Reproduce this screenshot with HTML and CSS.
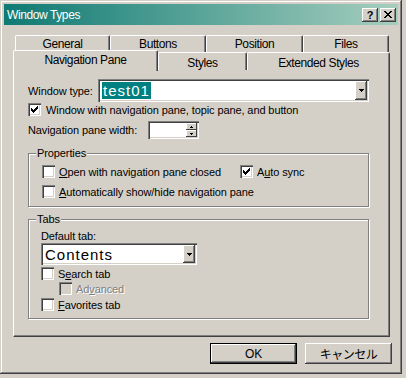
FILE: index.html
```html
<!DOCTYPE html>
<html lang="en">
<head>
  <meta charset="UTF-8">
  <title>Window Types</title>
  <link rel="stylesheet" href="styles.css">
</head>
<body>
  <div class="window">
    <!-- Title bar -->
    <div class="titlebar">
      <span class="title">Window Types</span>
      <div class="caption-buttons">
        <span class="cap-btn help">?</span>
        <span class="cap-btn">
          <svg width="8" height="7" viewBox="0 0 8 7"><path d="M0 0h2v1h-2z M6 0h2v1h-2z M1 1h2v1h-2z M5 1h2v1h-2z M2 2h4v1h-4z M3 3h2v1h-2z M2 4h4v1h-4z M1 5h2v1h-2z M5 5h2v1h-2z M0 6h2v1h-2z M6 6h2v1h-2z" fill="#000"/></svg>
        </span>
      </div>
    </div>

    <div class="content">
      <!-- Tabs -->
      <div class="tabrow back">
        <div class="tab tab-general">General</div>
        <div class="tab tab-buttons">Buttons</div>
        <div class="tab tab-position">Position</div>
        <div class="tab tab-files">Files</div>
      </div>
      <div class="tabrow front">
        <div class="tab tab-nav selected">Navigation Pane</div>
        <div class="tab tab-styles">Styles</div>
        <div class="tab tab-extended">Extended Styles</div>
      </div>

      <!-- Tab page -->
      <div class="panel">
        <div class="row type-row">
          <span class="type-label">Window type:</span>
          <div class="combo combo-wide">
            <div class="combo-text"><span class="sel">test01</span></div>
            <div class="drop-btn"><svg width="5" height="3" viewBox="0 0 5 3"><path d="M0 0h5v1h-1v1h-1v1h-1v-1h-1v-1h-1z" fill="#000"/></svg></div>
          </div>
        </div>

        <div class="check-row first">
          <span class="cb checked"><svg width="13" height="13" viewBox="0 0 13 13"><path d="M3 5h1v1h1v1h1v-1h1v-1h1v-1h1v-1h1v3h-1v1h-1v1h-1v1h-1v1h-1v-1h-1v-1h-1z" fill="#000"/></svg></span>
          <span>Window with navigation pane, topic pane, and button</span>
        </div>

        <div class="row width-row">
          <span class="width-label">Navigation pane width:</span>
          <div class="spin">
            <div class="spin-edit"></div>
            <div class="spin-btns">
              <div class="spin-btn"><svg width="3" height="2" viewBox="0 0 3 2"><path d="M1 0h1v1h1v1h-3v-1h1z" fill="#000"/></svg></div>
              <div class="spin-btn"><svg width="3" height="2" viewBox="0 0 3 2"><path d="M0 0h3v1h-1v1h-1v-1h-1z" fill="#000"/></svg></div>
            </div>
          </div>
        </div>

        <!-- Properties group -->
        <div class="group group-props">
          <span class="group-label">Properties</span>
          <div class="check-row">
            <div class="check-item closed-item">
              <span class="cb"></span>
              <span><u>O</u>pen with navigation pane closed</span>
            </div>
            <div class="check-item">
              <span class="cb checked"><svg width="13" height="13" viewBox="0 0 13 13"><path d="M3 5h1v1h1v1h1v-1h1v-1h1v-1h1v-1h1v3h-1v1h-1v1h-1v1h-1v1h-1v-1h-1v-1h-1z" fill="#000"/></svg></span>
              <span>A<u>u</u>to sync</span>
            </div>
          </div>
          <div class="check-row gap5">
            <span class="cb"></span>
            <span><u>A</u>utomatically show/hide navigation pane</span>
          </div>
        </div>

        <!-- Tabs group -->
        <div class="group group-tabs">
          <span class="group-label">Tabs</span>
          <div class="default-label">Default tab:</div>
          <div class="combo combo-small">
            <div class="combo-text"><span class="plain">Contents</span></div>
            <div class="drop-btn"><svg width="5" height="3" viewBox="0 0 5 3"><path d="M0 0h5v1h-1v1h-1v1h-1v-1h-1v-1h-1z" fill="#000"/></svg></div>
          </div>
          <div class="check-row gap1">
            <span class="cb"></span>
            <span>S<u>e</u>arch tab</span>
          </div>
          <div class="check-row indent">
            <span class="cb disabled"></span>
            <span class="disabled-text">Ad<u>v</u>anced</span>
          </div>
          <div class="check-row gap1">
            <span class="cb"></span>
            <span><u>F</u>avorites tab</span>
          </div>
        </div>
      </div>

      <!-- Dialog buttons -->
      <div class="buttons">
        <div class="btn default"><span>OK</span></div>
        <div class="btn jp"><span>キャンセル</span></div>
      </div>
    </div>
  </div>
</body>
</html>
```

FILE: styles.css
```css
/* Global */
* {
  margin: 0;
  padding: 0;
  box-sizing: border-box;
}

body {
  background: #d4d0c8;
  font-family: "Liberation Sans", Arial, sans-serif;
  font-size: 11px;
  letter-spacing: -0.1px;
  color: #000;
}

/* Window frame */
.window {
  width: 402px;
  height: 374px;
  padding: 4px;
  background: #d4d0c8;
  box-shadow: inset -1px -1px #404040, inset 1px 1px #d4d0c8,
              inset -2px -2px #808080, inset 2px 2px #fff;
}

.titlebar {
  height: 21px;
  display: flex;
  align-items: center;
  justify-content: space-between;
  padding: 0 2px 0 3px;
  background: linear-gradient(to right, #0e7a74, #a6cebe);
  color: #fff;
}

.title {
  font-size: 12px;
  letter-spacing: -0.4px;
}

.caption-buttons {
  display: flex;
  gap: 2px;
}

.cap-btn {
  width: 16px;
  height: 14px;
  display: flex;
  align-items: center;
  justify-content: center;
  background: #d4d0c8;
  color: #000;
  font-weight: bold;
  font-size: 11px;
  box-shadow: inset -1px -1px #404040, inset 1px 1px #fff,
              inset -2px -2px #808080;
}

.content {
  padding: 10px 0 0 9px;
}

/* Tabs */
.tabrow {
  display: flex;
}

.tabrow.back {
  height: 17px;
  margin-left: 2px;
}

.tabrow.front {
  height: 18px;
}

.tab {
  display: flex;
  align-items: center;
  justify-content: center;
  background: #d4d0c8;
  border-top: 1px solid #fff;
  border-left: 1px solid #fff;
  border-right: 1px solid #404040;
  border-radius: 2px 2px 0 0;
  box-shadow: inset -1px 0 #808080;
  font-size: 12px;
  letter-spacing: -0.4px;
}

.tab-general { width: 95px; }
.tab-buttons { width: 96px; }
.tab-position { width: 97px; }
.tab-files { width: 86px; }
.tab-styles { width: 89px; padding-top: 3px; }
.tab-extended { width: 143px; padding-top: 3px; }

.tab.selected {
  width: 145px;
  height: 21px;
  margin-top: -2px;
  padding-bottom: 2px;
  position: relative;
  z-index: 1;
}

/* Tab page */
.panel {
  width: 377px;
  height: 268px;
  margin-top: -1px;
  padding: 9px 0 0 14px;
  border-top: 1px solid #fff;
  border-left: 1px solid #fff;
  border-right: 1px solid #404040;
  border-bottom: 1px solid #404040;
  box-shadow: inset -1px -1px #808080;
}

.row {
  display: flex;
  align-items: center;
}

.type-row {
  height: 23px;
}

.type-label {
  width: 70px;
}

.combo {
  display: flex;
  background: #fff;
  padding: 2px;
  box-shadow: inset 1px 1px #808080, inset 2px 2px #404040,
              inset -1px -1px #fff, inset -2px -2px #d4d0c8;
}

.combo-wide {
  width: 271px;
  height: 23px;
}

.combo-small {
  width: 156px;
  height: 22px;
}

.combo-text {
  flex: 1;
  display: flex;
  align-items: center;
  padding-left: 2px;
  font-size: 15px;
  letter-spacing: 1px;
}

.combo-text .sel {
  background: #008080;
  color: #fff;
  height: 17px;
  line-height: 17px;
  padding: 0 1px;
}

.drop-btn {
  width: 12px;
  display: flex;
  align-items: center;
  justify-content: center;
  background: #d4d0c8;
  box-shadow: inset -1px -1px #404040, inset 1px 1px #fff,
              inset -2px -2px #808080;
}

.drop-btn svg,
.spin-btn svg,
.cb svg,
.cap-btn svg {
  display: block;
  shape-rendering: crispEdges;
}

/* Check boxes */
.check-row {
  display: flex;
  align-items: center;
  height: 15px;
  gap: 4px;
}

.check-row.first {
  gap: 5px;
}

.check-row.gap5 {
  margin-top: 5px;
}

.check-row.gap1 {
  margin-top: 1px;
}

.check-row.indent {
  margin-left: 18px;
}

.check-item {
  display: flex;
  align-items: center;
  gap: 4px;
}

.closed-item {
  width: 194px;
}

.cb {
  width: 13px;
  height: 13px;
  flex: none;
  background: #fff;
  box-shadow: inset 1px 1px #808080, inset 2px 2px #404040,
              inset -1px -1px #fff, inset -2px -2px #d4d0c8;
}

.cb.disabled {
  background: #d4d0c8;
}

.disabled-text {
  color: #808080;
  text-shadow: 1px 1px #fff;
}

/* Spin control */
.width-row {
  height: 18px;
  margin-top: 4px;
}

.width-label {
  width: 120px;
}

.spin {
  width: 51px;
  height: 18px;
  display: flex;
  padding: 2px;
  background: #fff;
  box-shadow: inset 1px 1px #808080, inset 2px 2px #404040,
              inset -1px -1px #fff, inset -2px -2px #d4d0c8;
}

.spin-edit {
  flex: 1;
}

.spin-btns {
  width: 11px;
  display: flex;
  flex-direction: column;
}

.spin-btn {
  flex: 1;
  display: flex;
  align-items: center;
  justify-content: center;
  background: #d4d0c8;
  box-shadow: inset -1px -1px #404040, inset 1px 1px #fff;
}

/* Group boxes */
.group {
  position: relative;
  width: 341px;
  border: 1px solid #808080;
  box-shadow: inset 1px 1px #fff, 1px 1px #fff;
}

.group-label {
  position: absolute;
  top: -8px;
  left: 7px;
  padding: 0 1px;
  background: #d4d0c8;
  line-height: 14px;
}

.group-props {
  height: 54px;
  margin-top: 14px;
  padding: 10px 0 0 13px;
}

.group-tabs {
  height: 100px;
  margin-top: 12px;
  padding: 9px 0 0 12px;
}

.default-label {
  height: 14px;
  line-height: 14px;
}

/* Dialog buttons */
.buttons {
  display: flex;
  justify-content: flex-end;
  gap: 8px;
  margin-top: 6px;
  padding-right: 6px;
}

.btn {
  width: 87px;
  height: 21px;
  display: flex;
  align-items: center;
  justify-content: center;
  background: #d4d0c8;
  font-size: 12px;
  box-shadow: inset -1px -1px #404040, inset 1px 1px #fff,
              inset -2px -2px #808080;
}

.btn.default {
  border: 1px solid #000;
}

.btn.jp {
  font-family: "Noto Sans CJK JP", sans-serif;
  letter-spacing: -0.5px;
}
```
